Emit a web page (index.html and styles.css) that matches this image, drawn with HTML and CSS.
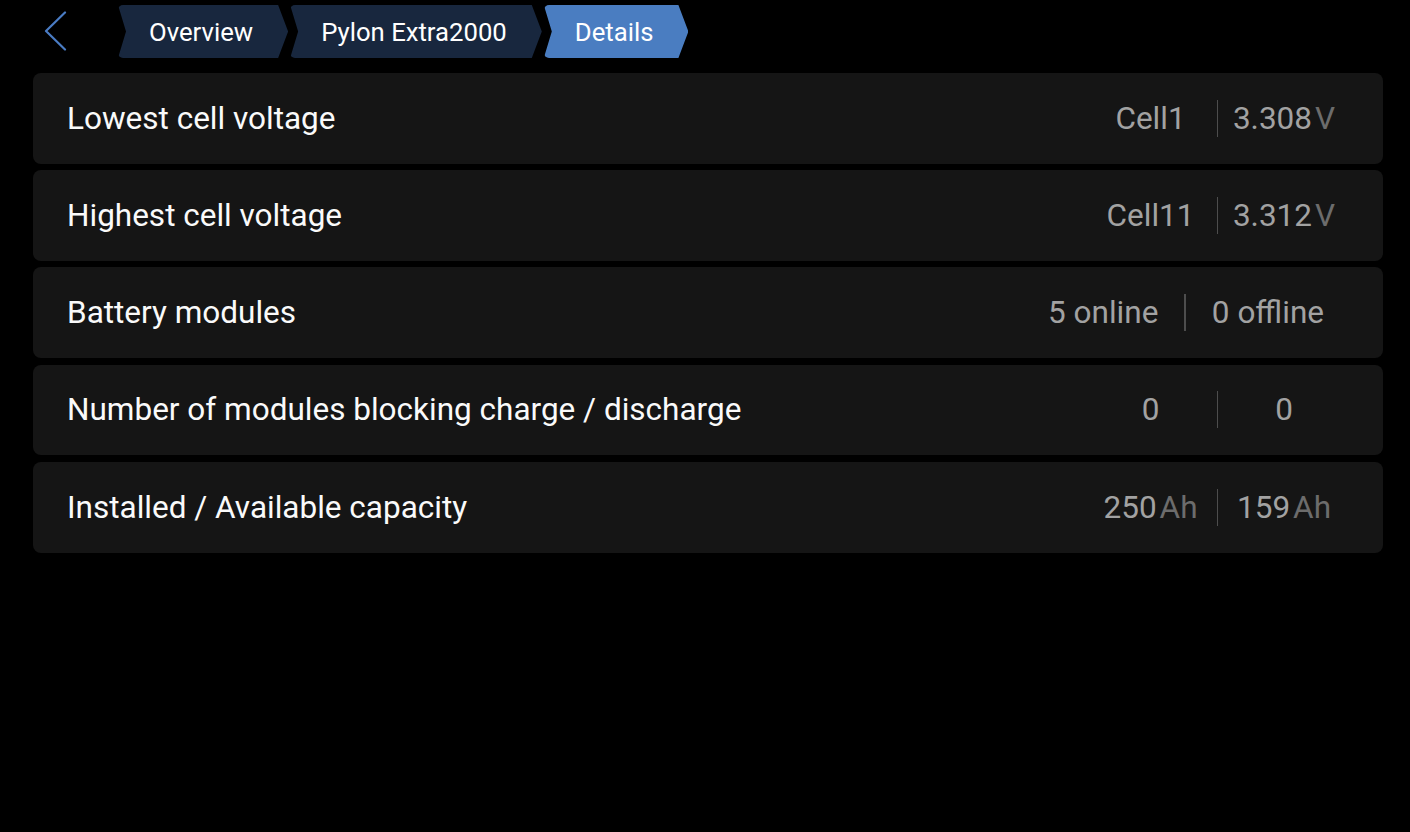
FILE: index.html
```html
<!DOCTYPE html>
<html lang="en">
<head>
<meta charset="utf-8">
<title>Details</title>
<link rel="stylesheet" href="styles.css">
</head>
<body>
<div class="page">
  <header class="topbar">
    <div class="back">
      <svg class="back-icon" width="24" height="42" viewBox="0 0 24 42" aria-hidden="true">
        <polyline points="21,1.5 2,20 21,38.5" fill="none" stroke="#4a7cc4" stroke-width="2.2" stroke-linecap="round" stroke-linejoin="round"/>
      </svg>
    </div>
    <nav class="crumbs">
      <span class="crumb">Overview</span>
      <span class="crumb">Pylon Extra2000</span>
      <span class="crumb crumb-active">Details</span>
    </nav>
  </header>
  <main class="list">
    <div class="row">
      <span class="label">Lowest cell voltage</span>
      <div class="vals">
        <span class="cell">Cell1</span>
        <span class="sep"></span>
        <span class="cell">3.308<span class="unit">V</span></span>
      </div>
    </div>
    <div class="row">
      <span class="label">Highest cell voltage</span>
      <div class="vals">
        <span class="cell">Cell11</span>
        <span class="sep"></span>
        <span class="cell">3.312<span class="unit">V</span></span>
      </div>
    </div>
    <div class="row">
      <span class="label">Battery modules</span>
      <div class="vals">
        <span class="cell cell-wide">5 online</span>
        <span class="sep"></span>
        <span class="cell cell-wide">0 offline</span>
      </div>
    </div>
    <div class="row">
      <span class="label">Number of modules blocking charge / discharge</span>
      <div class="vals">
        <span class="cell">0</span>
        <span class="sep"></span>
        <span class="cell">0</span>
      </div>
    </div>
    <div class="row">
      <span class="label">Installed / Available capacity</span>
      <div class="vals">
        <span class="cell">250<span class="unit">Ah</span></span>
        <span class="sep"></span>
        <span class="cell">159<span class="unit">Ah</span></span>
      </div>
    </div>
  </main>
</div>
</body>
</html>
```
FILE: styles.css
```css
* { box-sizing: border-box; }

html, body {
  margin: 0;
  padding: 0;
  background: #000;
  font-family: Roboto, "Noto Sans", "Liberation Sans", sans-serif;
  color: #fff;
}

.page {
  width: 1410px;
  height: 832px;
  padding: 5px 27px 0 33px;
}

.topbar {
  display: flex;
  align-items: center;
  height: 53px;
}

.back {
  width: 85px;
  height: 53px;
  display: flex;
  align-items: center;
  padding-left: 11px;
}

.back-icon { display: block; }

.crumbs {
  display: flex;
  height: 53px;
  gap: 2px;
}

.crumb {
  display: flex;
  align-items: center;
  height: 53px;
  padding: 0 35px 0 31px;
  font-size: 25.7px;
  color: #fff;
  background: #18273e;
  border-radius: 5px;
  clip-path: polygon(0 0, calc(100% - 10px) 0, 100% 50%, calc(100% - 10px) 100%, 0 100%, 8px 50%);
}

.crumb-active {
  background: #4a7dc1;
}

.list {
  display: flex;
  flex-direction: column;
  gap: 6.4px;
  margin-top: 15px;
}

.row {
  display: flex;
  align-items: center;
  justify-content: space-between;
  height: 90.8px;
  padding: 0 33px 0 34px;
  background: #151515;
  border-radius: 8px;
}

.label {
  font-size: 31.5px;
  color: #fafafa;
}

.vals {
  display: flex;
  align-items: center;
}

.cell {
  min-width: 132px;
  padding: 0 14px;
  text-align: center;
  font-size: 31.5px;
  color: #a2a2a2;
  white-space: nowrap;
}

.cell-wide {
  padding: 0 26px;
}

.unit {
  margin-left: 3px;
  color: #6c6c6c;
}

.sep {
  width: 1.5px;
  height: 37px;
  background: #4d4d4d;
}
```
